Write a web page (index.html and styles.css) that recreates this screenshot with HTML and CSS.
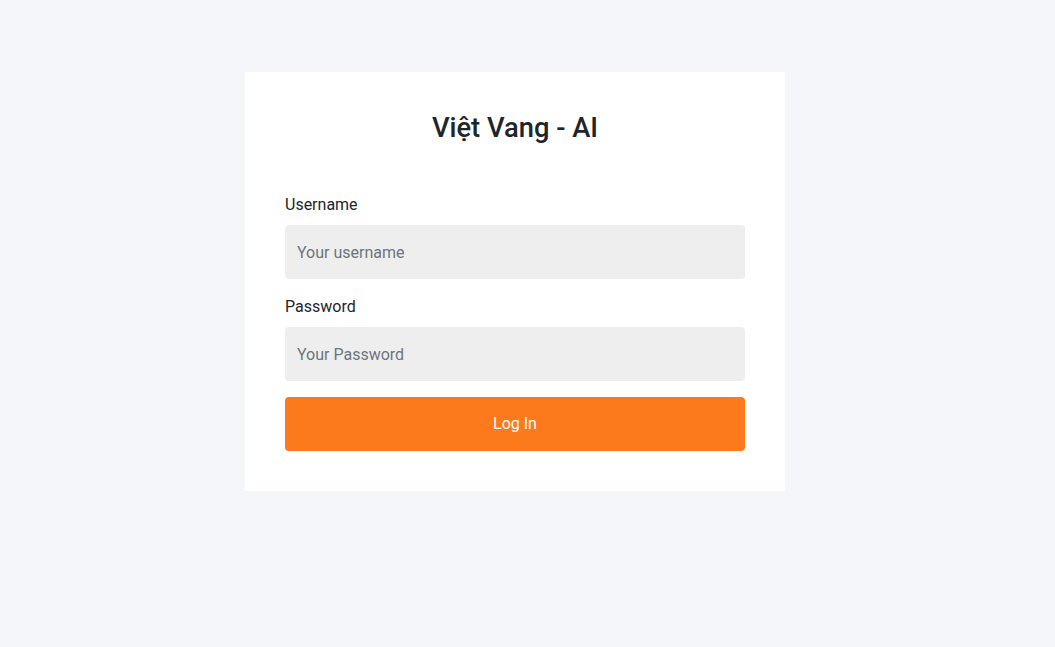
FILE: index.html
```html
<!DOCTYPE html>
<html lang="vi">
<head>
<meta charset="utf-8">
<title>Việt Vang - AI</title>
<link rel="stylesheet" href="styles.css">
</head>
<body>
<main class="page">
  <form class="card">
    <h1 class="title">Việt Vang - AI</h1>
    <div class="field">
      <label class="label" for="u">Username</label>
      <input class="input" id="u" type="text" placeholder="Your username">
    </div>
    <div class="field">
      <label class="label" for="p">Password</label>
      <input class="input" id="p" type="password" placeholder="Your Password">
    </div>
    <button class="btn" type="button">Log In</button>
  </form>
</main>
</body>
</html>
```
FILE: styles.css
```css
* { box-sizing: border-box; }
html, body {
  margin: 0;
  height: 100%;
  background: #f5f6fa;
  font-family: Roboto, "Liberation Sans", sans-serif;
  color: #212529;
}
.page {
  padding: 72px 0 0 245px;
}
.card {
  width: 540px;
  background: #ffffff;
  padding: 40px;
  display: flex;
  flex-direction: column;
}
.title {
  margin: 0 0 49px;
  padding-top: 1px;
  font-size: 27.3px;
  font-weight: 500;
  line-height: 31px;
  text-align: center;
  color: #212529;
}
.field {
  display: flex;
  flex-direction: column;
  margin-bottom: 16px;
}
.label {
  font-size: 16px;
  line-height: 24px;
  margin-bottom: 8px;
}
.input {
  height: 54px;
  border: none;
  border-radius: 4px;
  background: #eeeeee;
  padding: 0 12px;
  font-family: inherit;
  font-size: 16px;
  color: #212529;
  outline: none;
}
.input::placeholder { color: #6c757d; }
.btn {
  height: 54px;
  border: none;
  border-radius: 4px;
  background: #fc791c;
  color: #ffffff;
  font-family: inherit;
  font-size: 16px;
  padding: 0 0 2px;
  cursor: pointer;
}
```
